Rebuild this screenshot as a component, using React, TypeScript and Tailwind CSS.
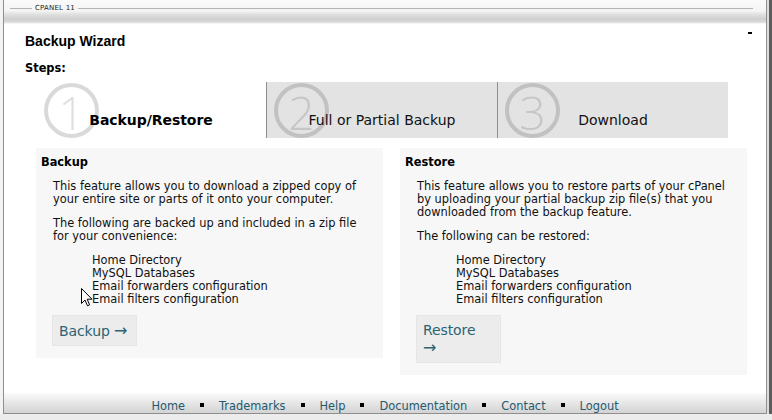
import { ReactElement, ReactNode } from 'react'

interface StepTabProps {
  n: number
  label: string
  active?: boolean
}

function StepTab({ n, label, active }: StepTabProps): ReactElement {
  return (
    <div
      className={`relative h-[56px] flex items-end justify-center pb-[9px] ${
        active ? 'w-[230px] bg-white' : 'w-[231px] bg-[#e3e3e3] border-l border-[#8e8e8e]'
      }`}
    >
      <div
        className={`absolute top-[1px] ${active ? 'left-[8px]' : 'left-[7px]'} w-[55px] h-[55px] rounded-full border-[4px] border-black/15 flex items-center justify-center`}
      >
        <span className="font-['Open_Sans',sans-serif] font-light text-[46px] leading-none text-black/15 mt-[3px]">{n}</span>
      </div>
      <span className={`relative text-[14px] leading-[17px] ${active ? 'font-bold tracking-[-0.05px] text-black' : 'text-[#111]'}`}>
        {label}
      </span>
    </div>
  )
}

interface PanelProps {
  title: string
  children: ReactNode
  items: string[]
  button: string
  wrapArrow?: boolean
}

function Panel({ title, children, items, button, wrapArrow }: PanelProps): ReactElement {
  const arrow = <span className="text-[16px] leading-[17px]">→</span>
  return (
    <div className="w-[347px] bg-[#f7f7f7] pt-[8px] pb-[12px] pl-[5px]">
      <div className="font-bold leading-[13px] text-black">{title}</div>
      <div className="pl-[12px]">
        {children}
        <div className="mt-[11px] pl-[39px] leading-[13px]">
          {items.map((item) => (
            <div key={item}>{item}</div>
          ))}
        </div>
        <div className="mt-[9px] -ml-[1px] w-[85px] px-[6px] pt-[6px] pb-[5px] bg-[#ececec] border border-[#e6e6e6] text-[14px] leading-[17px] tracking-[-0.1px] text-[#2b6373] cursor-pointer">
          {button}
          {wrapArrow ? <div>{arrow}</div> : <> {arrow}</>}
        </div>
      </div>
    </div>
  )
}

const included = ['Home Directory', 'MySQL Databases', 'Email forwarders configuration', 'Email filters configuration']
const footerLinks = ['Home', 'Trademarks', 'Help', 'Documentation', 'Contact', 'Logout']

export default function App(): ReactElement {
  return (
    <div className="relative w-[772px] h-[420px] overflow-hidden bg-[#ececec] font-['DejaVu_Sans',Verdana,sans-serif] text-[11.4px] text-[#111]">
      <div className="flex h-[414px]">
        <div className="w-[3px] bg-[#f3f3f3]" />
        <div className="w-[764px] flex flex-col bg-white border-l border-r border-b border-[#8f8f8f]">
          {/* header bar */}
          <div className="h-[24px] bg-[linear-gradient(to_bottom,#fafafa_0,#f4f4f4_11px,#e2e2e2_14px,#cfcfcf_19px,#d9d9d9_22px,#ffffff_24px)]">
            <div className="h-[16px] flex items-center pl-[6px] pr-[13px]">
              <div className="w-[22px] h-px bg-[#b4b4b4]" />
              <span className="px-[3px] text-[7px] leading-none tracking-[0.2px] text-[#222]">CPANEL 11</span>
              <div className="flex-1 h-px bg-[#b4b4b4]" />
            </div>
          </div>

          <div className="flex-1 pl-[21px]">
            <div className="mt-[9px] flex items-start justify-between pr-[14px]">
              <div className="text-[14px] leading-[17px] font-bold font-['Liberation_Sans',Arial,sans-serif] text-black">Backup Wizard</div>
              <div className="w-[4px] h-[2px] bg-black mt-[-1px]" />
            </div>
            <div className="mt-[12px] font-bold leading-[13px] text-black">Steps:</div>

            <div className="mt-[7px] ml-[11px] flex">
              <StepTab n={1} label="Backup/Restore" active />
              <StepTab n={2} label="Full or Partial Backup" />
              <StepTab n={3} label="Download" />
            </div>

            <div className="mt-[10px] ml-[11px] flex items-start gap-[17px] leading-[13px]">
              <Panel title="Backup" items={included} button="Backup">
                <p className="mt-[11px] whitespace-nowrap">
                  This feature allows you to download a zipped copy of
                  <br />
                  your entire site or parts of it onto your computer.
                </p>
                <p className="mt-[11px] whitespace-nowrap">
                  The following are backed up and included in a zip file
                  <br />
                  for your convenience:
                </p>
              </Panel>
              <Panel title="Restore" items={included} button="Restore" wrapArrow>
                <p className="mt-[11px] whitespace-nowrap">
                  This feature allows you to restore parts of your cPanel
                  <br />
                  by uploading your partial backup zip file(s) that you
                  <br />
                  downloaded from the backup feature.
                </p>
                <p className="mt-[11px] whitespace-nowrap">The following can be restored:</p>
              </Panel>
            </div>
          </div>

          {/* footer */}
          <div className="h-[20px] pt-[6px] flex items-center justify-center gap-[15px] bg-gradient-to-b from-[#fafafa] to-[#d3d3d3]">
            {footerLinks.map((link, idx) => (
              <div key={link} className="flex items-center gap-[15px]">
                {idx > 0 && <div className="w-[4px] h-[4px] bg-black mb-[3px]" />}
                <span className="text-[#1f5a6e] leading-[13px] cursor-pointer">{link}</span>
              </div>
            ))}
          </div>
        </div>
        <div className="w-[2px] bg-[#dcdcdc]" />
        <div className="w-[3px] bg-[#5c5c5c]" />
      </div>

      {/* mouse pointer */}
      <svg className="absolute left-[81px] top-[288px]" width="12" height="19" viewBox="0 0 12 19">
        <path d="M0.5 0.5 L0.5 15.5 L4 12 L6.5 17.8 L8.6 16.9 L6.2 11.2 L11 11.2 Z" fill="#fff" stroke="#000" strokeWidth="1" strokeLinejoin="round" />
      </svg>
    </div>
  )
}
